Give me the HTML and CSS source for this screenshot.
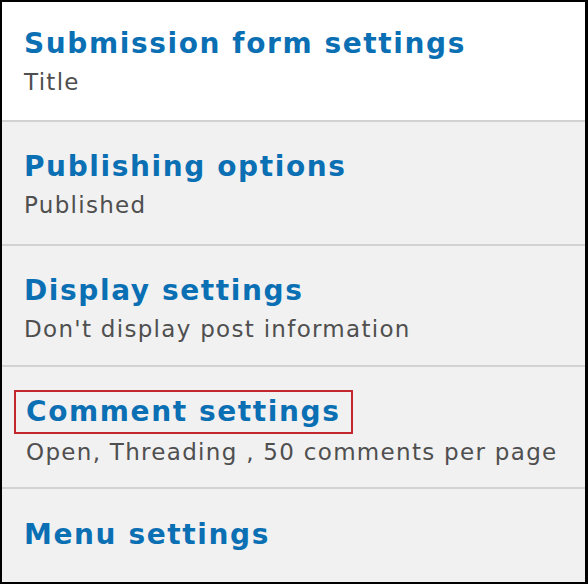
FILE: index.html
```html
<!DOCTYPE html>
<html>
<head>
<meta charset="utf-8">
<link rel="stylesheet" href="styles.css">
</head>
<body>
<div class="tabs">
  <div class="tab tab-active">
    <a class="tab-title" href="#">Submission form settings</a>
    <div class="tab-summary">Title</div>
  </div>
  <div class="tab tab-tall">
    <a class="tab-title" href="#">Publishing options</a>
    <div class="tab-summary">Published</div>
  </div>
  <div class="tab tab-short">
    <a class="tab-title" href="#">Display settings</a>
    <div class="tab-summary">Don't display post information</div>
  </div>
  <div class="tab tab-focus">
    <a class="tab-title tab-title-focus" href="#">Comment settings</a>
    <div class="tab-summary">Open, Threading , 50 comments per page</div>
  </div>
  <div class="tab tab-last">
    <a class="tab-title" href="#">Menu settings</a>
  </div>
</div>
</body>
</html>
```

FILE: styles.css
```css
html, body {
  margin: 0;
  padding: 0;
  background: #000;
}
.tabs {
  box-sizing: border-box;
  width: 588px;
  height: 584px;
  border-style: solid;
  border-color: #000;
  border-width: 2px 3px 2px 2px;
  background: #f1f1f1;
  display: flex;
  flex-direction: column;
  font-family: "DejaVu Sans", Verdana, sans-serif;
}
.tab {
  box-sizing: border-box;
  flex: none;
  height: 122px;
  padding: 25px 0 0 22px;
  border-bottom: 2px solid #d2d2d2;
  display: flex;
  flex-direction: column;
  align-items: flex-start;
}
.tab-active {
  background: #fff;
  height: 120px;
  padding-top: 22px;
}
.tab-tall {
  height: 124px;
}
.tab-short {
  height: 121px;
}
.tab-focus {
  padding-top: 23px;
}
.tab-last {
  flex: 1;
  border-bottom: none;
  padding-top: 26px;
}
.tab-title {
  color: #0b6fb4;
  font-weight: bold;
  font-size: 28px;
  line-height: 40px;
  letter-spacing: 1.6px;
  text-decoration: none;
}
.tab-title-focus {
  margin-left: -10px;
  padding: 0 11px 0 10px;
  border: 2px solid #c1272d;
}
.tab-summary {
  color: #4f4f4f;
  font-size: 23px;
  line-height: 36px;
  letter-spacing: 1.3px;
}
.tab-focus .tab-summary {
  margin-left: 2px;
}
```
